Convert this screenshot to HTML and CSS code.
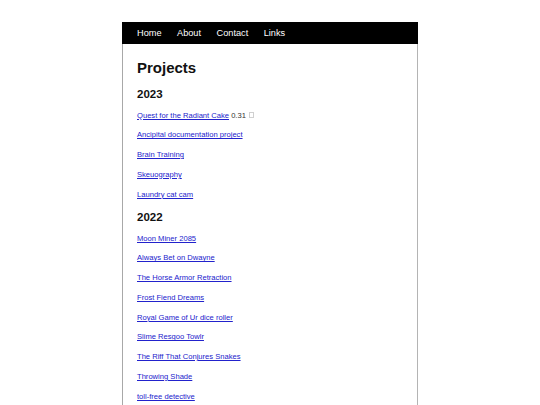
FILE: index.html
```html
<!DOCTYPE html>
<html>
<head>
<meta charset="utf-8">
<link rel="stylesheet" href="styles.css">
</head>
<body>
<div class="page">
  <nav class="nav">
    <a href="#">Home</a>
    <a href="#">About</a>
    <a href="#">Contact</a>
    <a href="#">Links</a>
  </nav>
  <main class="content">
    <h1 class="title">Projects</h1>
    <h2 class="year">2023</h2>
    <ul class="list">
      <li><a href="#">Quest for the Radiant Cake</a> 0.31 <span class="tofu"></span></li>
      <li><a href="#">Ancipital documentation project</a></li>
      <li><a href="#">Brain Training</a></li>
      <li><a href="#">Skeuography</a></li>
      <li><a href="#">Laundry cat cam</a></li>
    </ul>
    <h2 class="year">2022</h2>
    <ul class="list">
      <li><a href="#">Moon Miner 2085</a></li>
      <li><a href="#">Always Bet on Dwayne</a></li>
      <li><a href="#">The Horse Armor Retraction</a></li>
      <li><a href="#">Frost Fiend Dreams</a></li>
      <li><a href="#">Royal Game of Ur dice roller</a></li>
      <li><a href="#">Slime Resgoo Towlr</a></li>
      <li><a href="#">The Riff That Conjures Snakes</a></li>
      <li><a href="#">Throwing Shade</a></li>
      <li><a href="#">toll-free detective</a></li>
    </ul>
  </main>
</div>
</body>
</html>
```
FILE: styles.css
```css
html, body {
  margin: 0;
  padding: 0;
  background: #ffffff;
  height: 100%;
  overflow: hidden;
}
body {
  font-family: "Liberation Sans", Arial, sans-serif;
  color: #111;
}
.page {
  width: 296px;
  margin: 22px auto 0;
}
.nav {
  background: #000;
  height: 22px;
  display: flex;
  align-items: center;
  gap: 15.5px;
  padding-left: 15px;
}
.nav a {
  color: #fff;
  text-decoration: none;
  font-size: 9.2px;
  line-height: 22px;
}
.content {
  border-left: 1px solid #a8a8a8;
  border-right: 1px solid #b4b4b4;
  padding: 15px 14px 0;
  min-height: 400px;
}
.title {
  margin: 0;
  font-size: 15px;
  line-height: 17px;
  font-weight: bold;
  color: #111;
}
.year {
  margin: 11.5px 0 0;
  font-size: 11.5px;
  line-height: 13px;
  font-weight: bold;
  color: #111;
}
.list + .year {
  margin-top: 12px;
}
.list {
  list-style: none;
  margin: 10px 0 0;
  padding: 0;
  display: flex;
  flex-direction: column;
  gap: 10.75px;
}
.list li {
  font-size: 7.6px;
  line-height: 9px;
  color: #333;
}
.list a {
  color: #2222cc;
  text-decoration: underline;
}
.tofu {
  display: inline-block;
  width: 3px;
  height: 4px;
  border: 1px solid #d0d0d0;
  vertical-align: 0;
  margin-left: 1px;
}
```
